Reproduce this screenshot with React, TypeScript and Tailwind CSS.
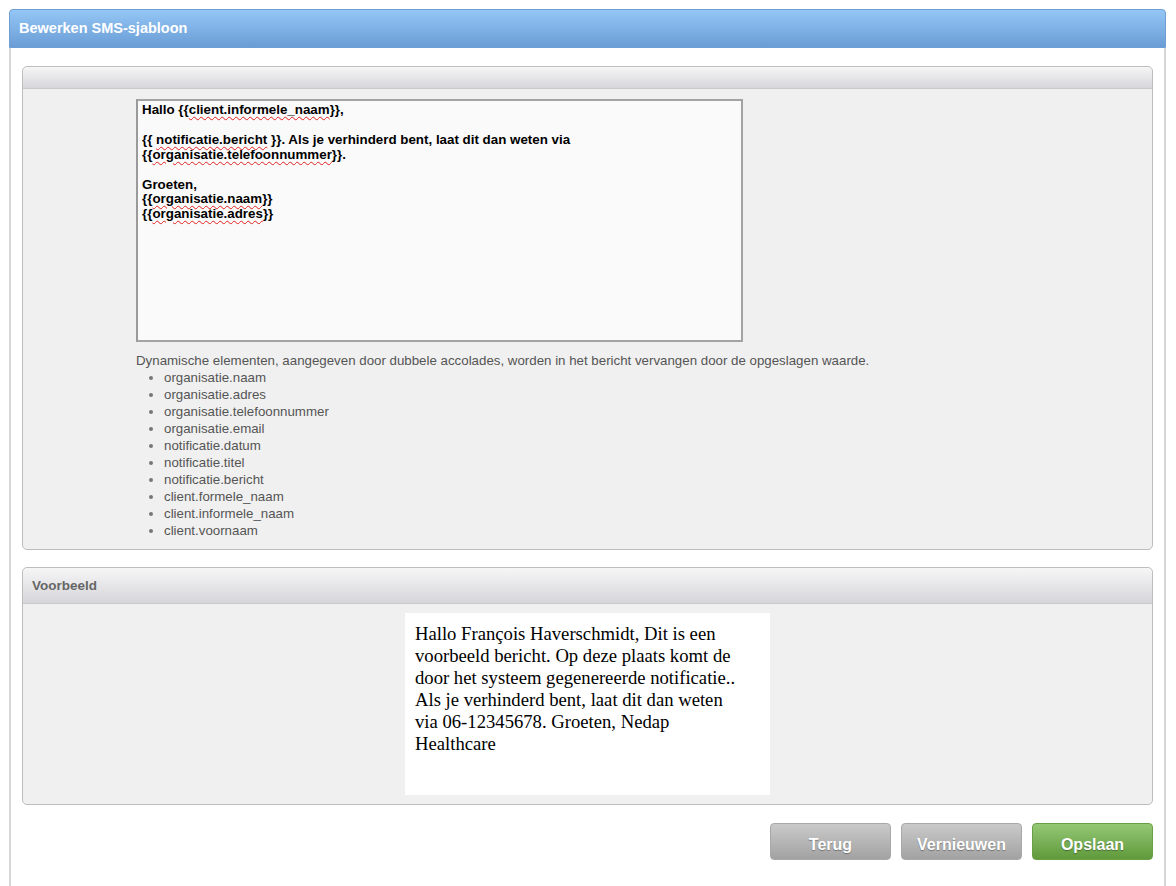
const variables = [
  'organisatie.naam',
  'organisatie.adres',
  'organisatie.telefoonnummer',
  'organisatie.email',
  'notificatie.datum',
  'notificatie.titel',
  'notificatie.bericht',
  'client.formele_naam',
  'client.informele_naam',
  'client.voornaam',
];

function Misspelled({ children }: { children: React.ReactNode }) {
  return (
    <span className="underline decoration-wavy decoration-[#e02020] decoration-1 underline-offset-2">
      {children}
    </span>
  );
}

function PanelHeader({ title }: { title?: string }) {
  return (
    <div className="rounded-t-[5px] border-b border-[#c8c8cc] bg-gradient-to-b from-[#f6f6f7] to-[#d6d6da] px-[9px]">
      {title ? (
        <div className="py-[10px] text-[13.5px] font-bold leading-[15px] text-[#666]">{title}</div>
      ) : (
        <div className="h-[21px]" />
      )}
    </div>
  );
}

function Button({ label, green }: { label: string; green?: boolean }) {
  return (
    <button
      className={
        green
          ? 'h-[37px] w-[121px] rounded-[4px] border border-[#6a9f48] bg-gradient-to-b from-[#95c874] to-[#5f9a3b] pt-[6px] text-[16px] font-bold text-white [text-shadow:0_1px_1px_rgba(0,0,0,0.35)]'
          : 'h-[37px] w-[121px] rounded-[4px] border border-[#a8a8a8] bg-gradient-to-b from-[#cacaca] to-[#a2a2a2] pt-[6px] text-[16px] font-bold text-white [text-shadow:0_1px_1px_rgba(0,0,0,0.35)]'
      }
    >
      {label}
    </button>
  );
}

export default function App() {
  return (
    <div className="min-h-[886px] bg-white pl-[9px] pr-[10px] pt-[9px] font-['Liberation_Sans',Arial,sans-serif]">
      {/* Dialog */}
      <div className="flex min-h-[877px] flex-col">
        <div className="flex h-[39px] items-center rounded-t-[4px] border border-[#6f9fd2] bg-gradient-to-b from-[#94c6f6] to-[#6a9dd5] px-[9px]">
          <h1 className="text-[14.5px] font-bold text-white">Bewerken SMS-sjabloon</h1>
        </div>

        <div className="flex flex-1 flex-col border-x-2 border-[#d6d6d6] px-[11px] pt-[18px]">
          {/* Template editor */}
          <section className="rounded-[5px] border border-[#bdbdbd] bg-[#f0f0f0]">
            <PanelHeader />
            <div className="pb-[10px] pl-[113px] pt-[10px]">
              <div className="h-[243px] w-[607px] border-2 border-[#a3a3a3] border-l-[#9a9a9a] bg-[#fafafa] px-[4px] py-[2px] text-[13.35px] font-bold leading-[14.5px] text-black">
                <div>
                  Hallo {'{{'}
                  <Misspelled>client.informele_naam</Misspelled>
                  {'}}'},
                </div>
                <div>&nbsp;</div>
                <div className="mt-[1px]">
                  {'{{ '}
                  <Misspelled>notificatie.bericht</Misspelled>
                  {' }}'}. Als je verhinderd bent, laat dit dan weten via
                </div>
                <div>
                  {'{{'}
                  <Misspelled>organisatie.telefoonnummer</Misspelled>
                  {'}}'}.
                </div>
                <div>&nbsp;</div>
                <div className="mt-[1px]">Groeten,</div>
                <div>
                  {'{{'}
                  <Misspelled>organisatie.naam</Misspelled>
                  {'}}'}
                </div>
                <div>
                  {'{{'}
                  <Misspelled>organisatie.adres</Misspelled>
                  {'}}'}
                </div>
              </div>

              <p className="mt-[10px] text-[13.3px] leading-[17px] text-[#555]">
                Dynamische elementen, aangegeven door dubbele accolades, worden in het bericht vervangen door de opgeslagen waarde.
              </p>
              <ul className="list-disc pl-[28px] text-[13.3px] leading-[17px] text-[#555] marker:text-[#777]">
                {variables.map((v) => (
                  <li key={v}>{v}</li>
                ))}
              </ul>
            </div>
          </section>

          {/* Preview */}
          <section className="mt-[17px] rounded-[5px] border border-[#bdbdbd] bg-[#f0f0f0]">
            <PanelHeader title="Voorbeeld" />
            <div className="flex justify-center pb-[9px] pt-[9px]">
              <div className="h-[182px] w-[365px] bg-white pl-[10px] pr-[22px] pt-[10px] font-['Liberation_Serif','Times_New_Roman',serif] text-[18.67px] leading-[22px] text-black">
                Hallo François Haverschmidt, Dit is een voorbeeld bericht. Op deze plaats komt de door het systeem gegenereerde notificatie.. Als je verhinderd bent, laat dit dan weten via 06-12345678. Groeten, Nedap Healthcare
              </div>
            </div>
          </section>

          {/* Actions */}
          <div className="mt-[18px] flex justify-end gap-[10px]">
            <Button label="Terug" />
            <Button label="Vernieuwen" />
            <Button label="Opslaan" green />
          </div>
        </div>
      </div>
    </div>
  );
}
